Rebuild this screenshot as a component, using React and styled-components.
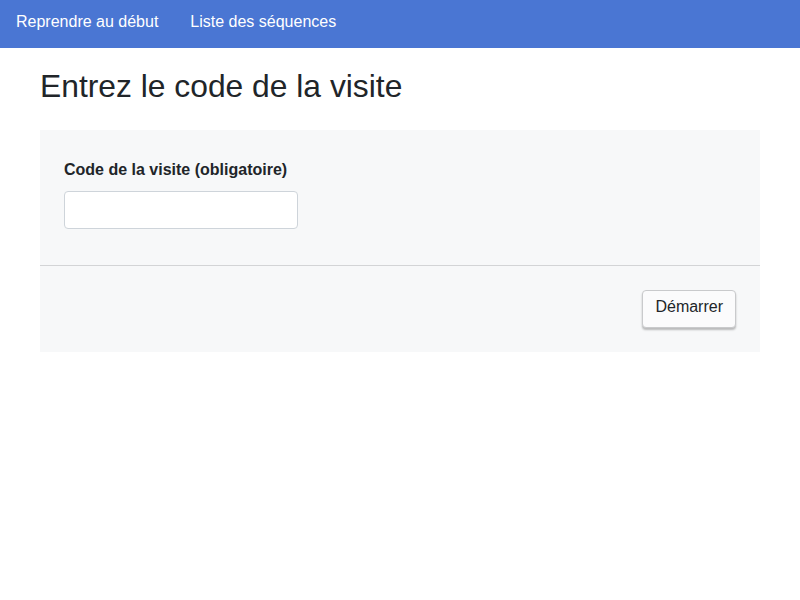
import styled, { createGlobalStyle } from 'styled-components';

const GlobalStyle = createGlobalStyle`
    body {
        margin: 0;
        font-family: "Liberation Sans", Arial, sans-serif;
        color: #212529;
        background: #ffffff;
    }
`;

const App = () => {
    return (
        <>
            <GlobalStyle />
            <NavBar>
                <NavLink href="#">Reprendre au début</NavLink>
                <NavLink href="#">Liste des séquences</NavLink>
            </NavBar>
            <Main>
                <Title>Entrez le code de la visite</Title>
                <Card>
                    <CardBody>
                        <Label htmlFor="code">Code de la visite (obligatoire)</Label>
                        <Input id="code" type="text" />
                    </CardBody>
                    <CardFooter>
                        <StartButton>Démarrer</StartButton>
                    </CardFooter>
                </Card>
            </Main>
        </>
    );
};

const NavBar = styled.nav`
    display: flex;
    align-items: center;
    gap: 32px;
    height: 48px;
    padding: 0 16px;
    background-color: #4a76d3;
`;

const NavLink = styled.a`
    color: #ffffff;
    font-size: 16px;
    text-decoration: none;
    margin-top: -5px;
`;

const Main = styled.main`
    padding: 0 40px;
`;

const Title = styled.h1`
    margin: 18px 0 24px;
    font-size: 31.8px;
    font-weight: 400;
    line-height: 40px;
    color: #212529;
`;

const Card = styled.div`
    background-color: #f7f8f9;
`;

const CardBody = styled.div`
    display: flex;
    flex-direction: column;
    align-items: flex-start;
    padding: 30px 24px 36px;
    border-bottom: 1px solid #d3d4d6;
`;

const Label = styled.label`
    font-size: 16px;
    font-weight: 700;
    line-height: 20px;
    margin-bottom: 11px;
`;

const Input = styled.input`
    box-sizing: border-box;
    width: 234px;
    height: 38px;
    border: 1px solid #ced4da;
    border-radius: 4px;
    background: #ffffff;
    font-size: 16px;
    padding: 6px 12px;
`;

const CardFooter = styled.div`
    display: flex;
    justify-content: flex-end;
    padding: 24px 24px 24px;
`;

const StartButton = styled.button`
    box-sizing: border-box;
    height: 38px;
    padding: 0 12px 5px;
    border: 1px solid #c9cacc;
    border-radius: 4px;
    background-color: #fbfbfc;
    box-shadow: 0 2px 2px rgba(0, 0, 0, 0.25);
    font-family: "Liberation Sans", Arial, sans-serif;
    font-size: 16px;
    color: #212529;
    cursor: pointer;
`;

export default App;
